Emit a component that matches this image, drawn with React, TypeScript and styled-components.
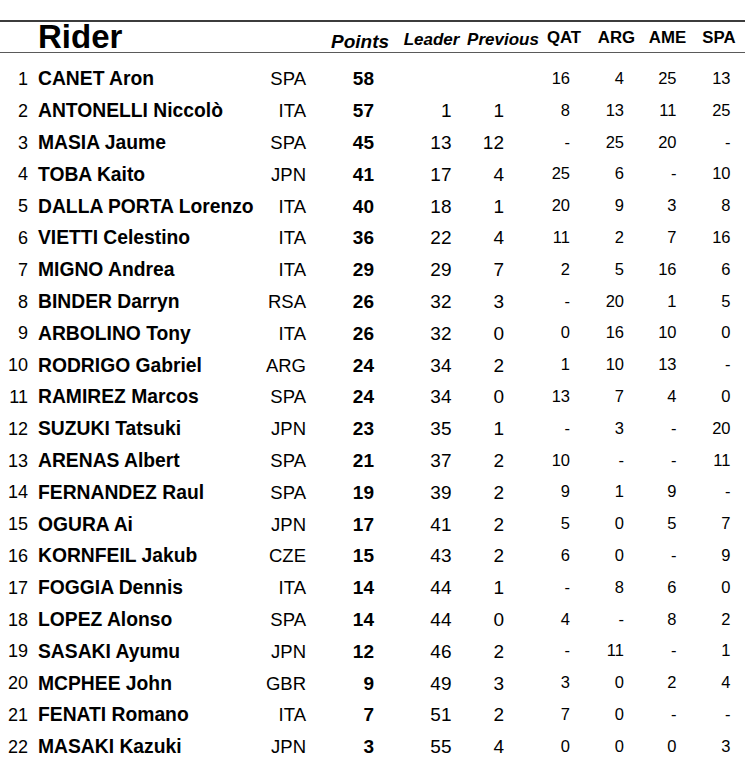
import React from "react";
import styled, { createGlobalStyle } from "styled-components";

type Rider = {
  pos: number;
  name: string;
  nation: string;
  points: number;
  leader: string;
  previous: string;
  races: string[];
};

const RACES = ["QAT", "ARG", "AME", "SPA"];

// right padding of each race column, so values line up with the reference
const RACE_PAD = [21, 18, 16.5, 14.5];

const riders: Rider[] = [
  { pos: 1, name: "CANET Aron", nation: "SPA", points: 58, leader: "", previous: "", races: ["16", "4", "25", "13"] },
  { pos: 2, name: "ANTONELLI Niccolò", nation: "ITA", points: 57, leader: "1", previous: "1", races: ["8", "13", "11", "25"] },
  { pos: 3, name: "MASIA Jaume", nation: "SPA", points: 45, leader: "13", previous: "12", races: ["-", "25", "20", "-"] },
  { pos: 4, name: "TOBA Kaito", nation: "JPN", points: 41, leader: "17", previous: "4", races: ["25", "6", "-", "10"] },
  { pos: 5, name: "DALLA PORTA Lorenzo", nation: "ITA", points: 40, leader: "18", previous: "1", races: ["20", "9", "3", "8"] },
  { pos: 6, name: "VIETTI Celestino", nation: "ITA", points: 36, leader: "22", previous: "4", races: ["11", "2", "7", "16"] },
  { pos: 7, name: "MIGNO Andrea", nation: "ITA", points: 29, leader: "29", previous: "7", races: ["2", "5", "16", "6"] },
  { pos: 8, name: "BINDER Darryn", nation: "RSA", points: 26, leader: "32", previous: "3", races: ["-", "20", "1", "5"] },
  { pos: 9, name: "ARBOLINO Tony", nation: "ITA", points: 26, leader: "32", previous: "0", races: ["0", "16", "10", "0"] },
  { pos: 10, name: "RODRIGO Gabriel", nation: "ARG", points: 24, leader: "34", previous: "2", races: ["1", "10", "13", "-"] },
  { pos: 11, name: "RAMIREZ Marcos", nation: "SPA", points: 24, leader: "34", previous: "0", races: ["13", "7", "4", "0"] },
  { pos: 12, name: "SUZUKI Tatsuki", nation: "JPN", points: 23, leader: "35", previous: "1", races: ["-", "3", "-", "20"] },
  { pos: 13, name: "ARENAS Albert", nation: "SPA", points: 21, leader: "37", previous: "2", races: ["10", "-", "-", "11"] },
  { pos: 14, name: "FERNANDEZ Raul", nation: "SPA", points: 19, leader: "39", previous: "2", races: ["9", "1", "9", "-"] },
  { pos: 15, name: "OGURA Ai", nation: "JPN", points: 17, leader: "41", previous: "2", races: ["5", "0", "5", "7"] },
  { pos: 16, name: "KORNFEIL Jakub", nation: "CZE", points: 15, leader: "43", previous: "2", races: ["6", "0", "-", "9"] },
  { pos: 17, name: "FOGGIA Dennis", nation: "ITA", points: 14, leader: "44", previous: "1", races: ["-", "8", "6", "0"] },
  { pos: 18, name: "LOPEZ Alonso", nation: "SPA", points: 14, leader: "44", previous: "0", races: ["4", "-", "8", "2"] },
  { pos: 19, name: "SASAKI Ayumu", nation: "JPN", points: 12, leader: "46", previous: "2", races: ["-", "11", "-", "1"] },
  { pos: 20, name: "MCPHEE John", nation: "GBR", points: 9, leader: "49", previous: "3", races: ["3", "0", "2", "4"] },
  { pos: 21, name: "FENATI Romano", nation: "ITA", points: 7, leader: "51", previous: "2", races: ["7", "0", "-", "-"] },
  { pos: 22, name: "MASAKI Kazuki", nation: "JPN", points: 3, leader: "55", previous: "4", races: ["0", "0", "0", "3"] },
];

const App: React.FC = () => {
  return (
    <>
      <GlobalStyle />
      <Standings>
        <HeaderRow>
          <span />
          <Title>Rider</Title>
          <span />
          <HeadLabel $italic $size={19} $pad={1}>
            Points
          </HeadLabel>
          <HeadLabel $italic $size={17} $pad={4}>
            Leader
          </HeadLabel>
          <HeadLabel $italic $size={17} $pad={4}>
            Previous
          </HeadLabel>
          {RACES.map((race) => (
            <HeadLabel key={race} $size={16.8} $pad={5}>
              {race}
            </HeadLabel>
          ))}
        </HeaderRow>
        <Body>
          {riders.map((r) => (
            <Row key={r.pos}>
              <Rank>{r.pos}</Rank>
              <Name>{r.name}</Name>
              <Nation>{r.nation}</Nation>
              <Points>{r.points}</Points>
              <Gap $pad={17.5}>{r.leader}</Gap>
              <Gap $pad={33}>{r.previous}</Gap>
              {r.races.map((result, i) => (
                <Race key={RACES[i]} $pad={RACE_PAD[i]}>
                  {result}
                </Race>
              ))}
            </Row>
          ))}
        </Body>
      </Standings>
    </>
  );
};

export default App;

const GlobalStyle = createGlobalStyle`
  html, body {
    margin: 0;
    padding: 0;
    background: #fff;
  }

  body {
    font-family: "Liberation Sans", Arial, sans-serif;
    color: #000;
  }
`;

const COLUMNS = "30px 232px 64px 68px 75px 68px 54px 51px 51px 52px";

const Standings = styled.div`
  width: 745px;
  padding-top: 20px;
`;

const HeaderRow = styled.div`
  display: grid;
  grid-template-columns: ${COLUMNS};
  grid-template-rows: 30px;
  align-items: end;
  border-top: 2px solid #3c3c3c;
  border-bottom: 1.5px solid #5a5a5a;
`;

const Title = styled.div`
  padding-left: 8px;
  font-size: 33px;
  font-weight: 700;
  line-height: 1;
  margin-bottom: -1px;
  white-space: nowrap;
`;

const HeadLabel = styled.div<{ $italic?: boolean; $size: number; $pad: number }>`
  display: flex;
  justify-content: center;
  padding-bottom: ${({ $pad }) => $pad}px;
  font-size: ${({ $size }) => $size}px;
  font-weight: 700;
  font-style: ${({ $italic }) => ($italic ? "italic" : "normal")};
  line-height: 1;
  white-space: nowrap;
`;

const Body = styled.div`
  padding-top: 10.6px;
`;

const Row = styled.div`
  display: grid;
  grid-template-columns: ${COLUMNS};
  height: 31.8px;
  align-items: center;
  white-space: nowrap;
`;

const Rank = styled.div`
  padding-right: 2px;
  text-align: right;
  font-size: 18px;
`;

const Name = styled.div`
  padding-left: 8px;
  font-size: 19.3px;
  font-weight: 700;
`;

const Nation = styled.div`
  padding-right: 20px;
  text-align: right;
  font-size: 18.5px;
`;

const Points = styled.div`
  padding-right: 20px;
  text-align: right;
  font-size: 19px;
  font-weight: 700;
`;

const Gap = styled.div<{ $pad: number }>`
  padding-right: ${({ $pad }) => $pad}px;
  text-align: right;
  font-size: 19px;
`;

const Race = styled.div<{ $pad: number }>`
  padding-right: ${({ $pad }) => $pad}px;
  padding-bottom: 2px;
  text-align: right;
  font-size: 16.5px;
`;
